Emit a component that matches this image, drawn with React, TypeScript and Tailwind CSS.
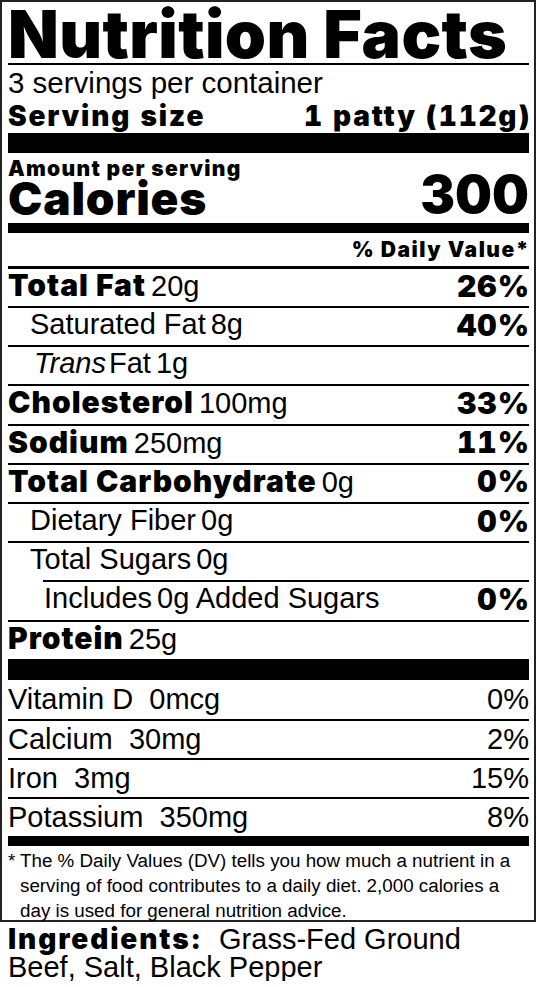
const heavy = "font-['Inter',sans-serif] font-black";
const regular = "font-['Liberation_Sans',Arial,sans-serif] font-normal";

type Nutrient = {
  label: string;
  amount: string;
  dv?: string;
  bold?: boolean;
  italic?: string;
  indent?: 'one' | 'two';
};

const nutrients: Nutrient[] = [
  { label: 'Total Fat', amount: '20g', dv: '26%', bold: true },
  { label: 'Saturated Fat', amount: '8g', dv: '40%', indent: 'one' },
  { label: 'Fat', italic: 'Trans', amount: '1g', indent: 'one' },
  { label: 'Cholesterol', amount: '100mg', dv: '33%', bold: true },
  { label: 'Sodium', amount: '250mg', dv: '11%', bold: true },
  { label: 'Total Carbohydrate', amount: '0g', dv: '0%', bold: true },
  { label: 'Dietary Fiber', amount: '0g', dv: '0%', indent: 'one' },
  { label: 'Total Sugars', amount: '0g', indent: 'one' },
  { label: 'Includes', amount: '0g Added Sugars', dv: '0%', indent: 'two' },
  { label: 'Protein', amount: '25g', bold: true },
];

const vitamins = [
  { name: 'Vitamin D', amount: '0mcg', dv: '0%' },
  { name: 'Calcium', amount: '30mg', dv: '2%' },
  { name: 'Iron', amount: '3mg', dv: '15%' },
  { name: 'Potassium', amount: '350mg', dv: '8%' },
];

function NutrientRow({ item, first }: { item: Nutrient; first: boolean }) {
  const border = first ? 'h-[37px]' : 'h-[39.2px] border-t-2 border-black';
  const indent =
    item.indent === 'two' ? 'ml-[35px] pl-px' : item.indent === 'one' ? 'pl-[22px]' : '';

  return (
    <div className={`flex items-center justify-between pb-[4px] ${border} ${indent}`}>
      <div className="flex items-baseline leading-none">
        {item.italic && (
          <span className={`${regular} mr-[3px] pl-[4px] text-[29px] italic`}>{item.italic}</span>
        )}
        <span className={item.bold ? `${heavy} text-[30px] tracking-[1px]` : `${regular} text-[29px]`}>
          {item.label}
        </span>
        <span className={`${regular} ml-[5px] text-[29px]`}>{item.amount}</span>
      </div>
      {item.dv && (
        <span className={`${heavy} mr-[-1px] text-[30px] leading-none tracking-[1px] tabular-nums`}>
          {item.dv}
        </span>
      )}
    </div>
  );
}

export default function App() {
  return (
    <div className="w-[537px] bg-white text-black">
      <div className="w-[536px] border-2 border-[#222] pl-[6px] pr-[5px]">
        <div className={`${heavy} h-[61px] pt-[2px] text-[66px] leading-[61px] tracking-[0.4px] whitespace-nowrap`}>
          Nutrition Facts
        </div>
        <div className="h-[2px] bg-black" />

        <div className={`${regular} h-[36px] text-[29.5px] leading-[36px]`}>3 servings per container</div>
        <div className={`${heavy} flex h-[32px] justify-between pb-[2px] text-[28px] leading-[30px] tracking-[1.8px] tabular-nums`}>
          <span>Serving size</span>
          <span className="mr-[-2px]">1 patty (112g)</span>
        </div>
        <div className="h-[20px] bg-black" />

        <div className={`${heavy} flex h-[70px] items-end justify-between pb-[2px]`}>
          <div className="flex flex-col">
            <span className="mb-[-4px] text-[21px] leading-none tracking-[1.3px]">Amount per serving</span>
            <span className="text-[46px] leading-none tracking-[0.8px]">Calories</span>
          </div>
          <span className="text-[52px] leading-none">300</span>
        </div>
        <div className="h-[10px] bg-black" />

        <div className={`${heavy} mr-[-1px] h-[33px] text-right text-[21px] leading-[33px] tracking-[1.5px]`}>
          % Daily Value*
        </div>
        <div className="h-[3px] bg-black" />

        {nutrients.map((item, i) => (
          <NutrientRow key={item.label} item={item} first={i === 0} />
        ))}
        <div className="h-[21px] bg-black" />

        {vitamins.map((v, i) => (
          <div
            key={v.name}
            className={`${regular} flex h-[39px] items-center justify-between text-[29px] leading-none ${
              i === 0 ? '' : 'border-t-2 border-black'
            }`}
          >
            <span className="whitespace-pre">
              {v.name}  {v.amount}
            </span>
            <span>{v.dv}</span>
          </div>
        ))}
        <div className="h-[10px] bg-black" />

        <div className={`${regular} flex h-[74px] pt-[2px] text-[18.8px] leading-[25px]`}>
          <span className="w-[12px] shrink-0">*</span>
          <p>
            The % Daily Values (DV) tells you how much a nutrient in a
            <br />
            serving of food contributes to a daily diet. 2,000 calories a
            <br />
            day is used for general nutrition advice.
          </p>
        </div>
      </div>

      <div className={`${regular} px-[8px] pt-[3px] text-[29px] leading-[28px]`}>
        <span className={`${heavy} mr-[8px] text-[28px] tracking-[1.9px]`}>Ingredients:</span> Grass-Fed Ground
        <br />
        Beef, Salt, Black Pepper
      </div>
    </div>
  );
}
